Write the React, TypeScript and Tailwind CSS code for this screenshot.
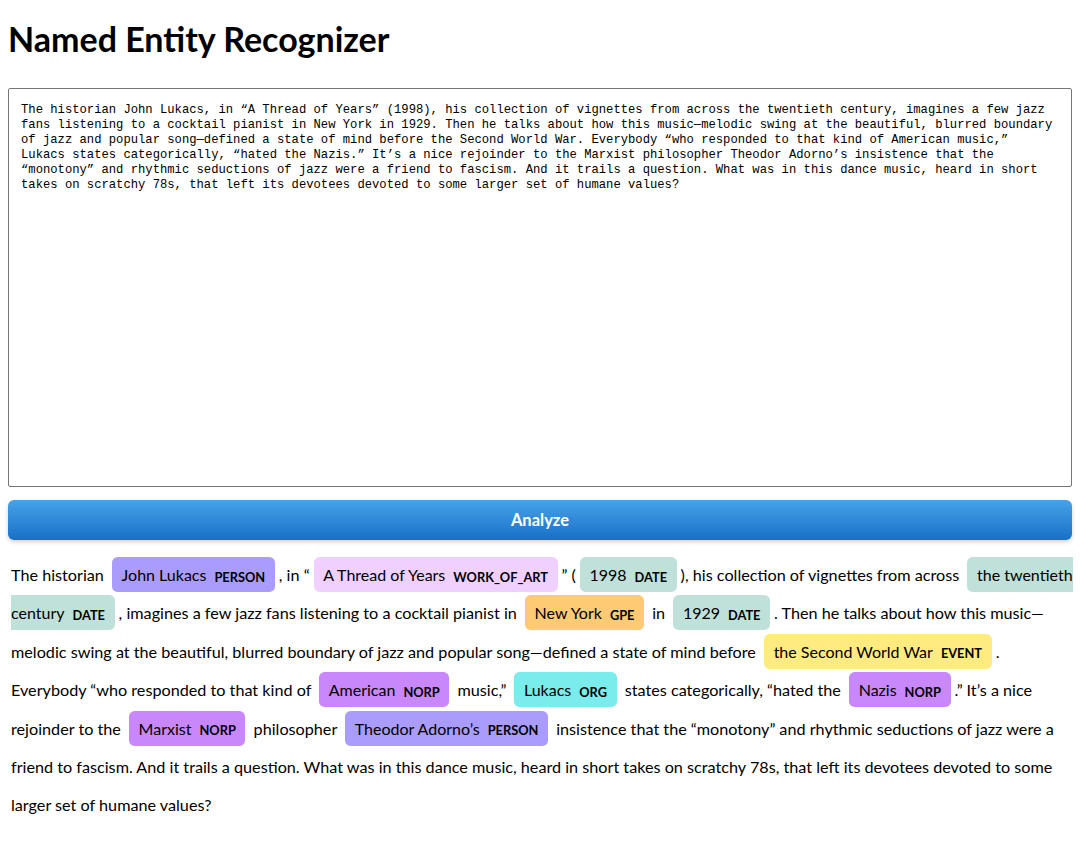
import React from "react";

type Piece = string | { text: string; label: string };

const COLORS: Record<string, string> = {
  PERSON: "bg-[#aa9cfc]",
  WORK_OF_ART: "bg-[#f0d0ff]",
  DATE: "bg-[#bfe1d9]",
  GPE: "bg-[#feca74]",
  EVENT: "bg-[#ffeb80]",
  NORP: "bg-[#c887fb]",
  ORG: "bg-[#7aecec]",
};

const SOURCE =
  "The historian John Lukacs, in “A Thread of Years” (1998), his collection of vignettes from across the twentieth century, imagines a few jazz fans listening to a cocktail pianist in New York in 1929. Then he talks about how this music—melodic swing at the beautiful, blurred boundary of jazz and popular song—defined a state of mind before the Second World War. Everybody “who responded to that kind of American music,” Lukacs states categorically, “hated the Nazis.” It’s a nice rejoinder to the Marxist philosopher Theodor Adorno’s insistence that the “monotony” and rhythmic seductions of jazz were a friend to fascism. And it trails a question. What was in this dance music, heard in short takes on scratchy 78s, that left its devotees devoted to some larger set of humane values?";

// spacing between pieces follows the original text exactly
const PIECES: Piece[] = [
  "The historian ",
  { text: "John Lukacs", label: "PERSON" },
  ", in “",
  { text: "A Thread of Years", label: "WORK_OF_ART" },
  "” (",
  { text: "1998", label: "DATE" },
  "), his collection of vignettes from across ",
  { text: "the twentieth century", label: "DATE" },
  ", imagines a few jazz fans listening to a cocktail pianist in ",
  { text: "New York", label: "GPE" },
  " in ",
  { text: "1929", label: "DATE" },
  ". Then he talks about how this music—melodic swing at the beautiful, blurred boundary of jazz and popular song—defined a state of mind before ",
  { text: "the Second World War", label: "EVENT" },
  ". Everybody “who responded to that kind of ",
  { text: "American", label: "NORP" },
  " music,” ",
  { text: "Lukacs", label: "ORG" },
  " states categorically, “hated the ",
  { text: "Nazis", label: "NORP" },
  ".” It’s a nice rejoinder to the ",
  { text: "Marxist", label: "NORP" },
  " philosopher ",
  { text: "Theodor Adorno’s", label: "PERSON" },
  " insistence that the “monotony” and rhythmic seductions of jazz were a friend to fascism. And it trails a question. What was in this dance music, heard in short takes on scratchy 78s, that left its devotees devoted to some larger set of humane values?",
];

function Entity({ text, label }: { text: string; label: string }) {
  return (
    <mark
      className={`${COLORS[label]} text-black text-[16px] px-[0.6em] py-[0.5em] mx-[0.25em] leading-none rounded-[0.35em]`}
    >
      {text}
      <span className="ml-2 align-middle text-[0.8em] font-bold leading-none uppercase">
        {label}
      </span>
    </mark>
  );
}

export default function App() {
  return (
    <div className="p-2 text-black font-['Lato','Noto_Sans',sans-serif]">
      <h1 className="mt-[11px] mb-[29px] text-[34px] leading-[40px] font-bold">
        Named Entity Recognizer
      </h1>

      <textarea
        defaultValue={SOURCE}
        className="block w-full h-[399px] resize-none border border-[#767676] rounded-[2px] pt-[14px] px-3 pb-3 font-['Liberation_Mono',monospace] text-[12.2px] leading-[15px] text-black outline-none"
      />

      <button
        type="button"
        className="block mt-[13px] w-full h-10 rounded-md bg-linear-to-b from-[#46a2e8] to-[#1870c8] text-white text-[16.5px] font-bold shadow-[0_2px_4px_rgba(0,0,0,0.18)]"
      >
        Analyze
      </button>

      {/* Entities rendered inline, displaCy style */}
      <div className="mt-4 pl-[3px] -mr-1 text-[16.2px] leading-[38.4px]">
        {PIECES.map((p, i) =>
          typeof p === "string" ? (
            <React.Fragment key={i}>{p}</React.Fragment>
          ) : (
            <Entity key={i} text={p.text} label={p.label} />
          )
        )}
      </div>
    </div>
  );
}
